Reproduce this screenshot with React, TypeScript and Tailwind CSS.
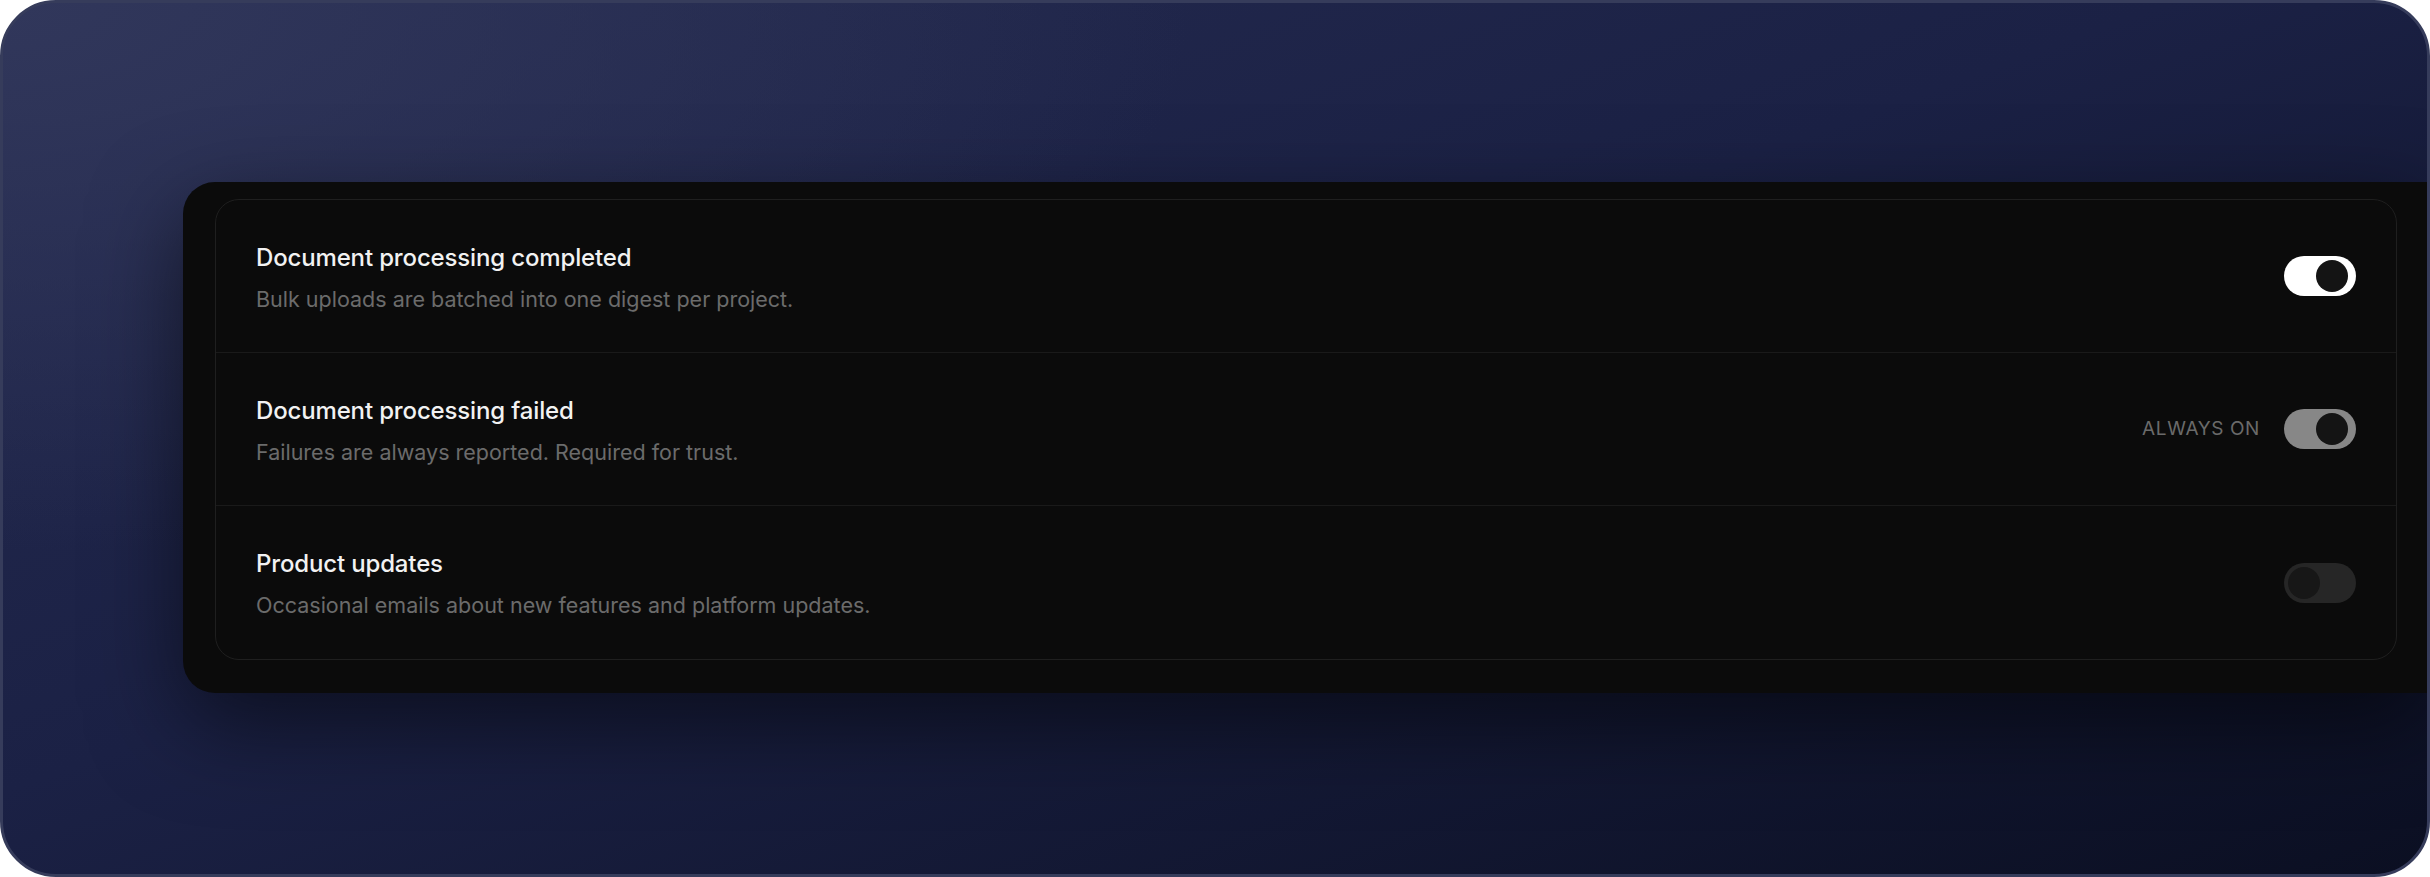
import { useState } from 'react';

type Pref = {
  title: string;
  desc: string;
  on: boolean;
  locked?: boolean;
};

const prefs: Pref[] = [
  {
    title: 'Document processing completed',
    desc: 'Bulk uploads are batched into one digest per project.',
    on: true,
  },
  {
    title: 'Document processing failed',
    desc: 'Failures are always reported. Required for trust.',
    on: true,
    locked: true,
  },
  {
    title: 'Product updates',
    desc: 'Occasional emails about new features and platform updates.',
    on: false,
  },
];

const Toggle = ({ on, locked, onClick }: { on: boolean; locked?: boolean; onClick?: () => void }) => {
  const track = locked ? 'bg-[#878787]' : on ? 'bg-white' : 'bg-[#262626]';
  return (
    <button
      type="button"
      onClick={onClick}
      disabled={locked}
      className={`flex h-[40px] w-[72px] shrink-0 items-center rounded-full p-[4px] ${track}`}
    >
      <span
        className={`h-[32px] w-[32px] rounded-full ${on ? 'translate-x-[28px] bg-[#141414]' : 'bg-[#171717]'}`}
      />
    </button>
  );
};

export default function App() {
  const [state, setState] = useState(prefs.map(p => p.on));

  return (
    <div className="min-h-screen bg-white" style={{ fontFamily: 'Inter, "Noto Sans", sans-serif' }}>
      <div className="flex h-[877px] w-[2430px] flex-col overflow-hidden rounded-[56px] border-[3px] border-[#363c5b] bg-[radial-gradient(ellipse_70%_90%_at_0%_0%,#31375b_0%,transparent_70%),linear-gradient(160deg,#252b50_0%,#1b2145_45%,#0b0f22_100%)] pl-[180px] pt-[179px]">
        <div className="rounded-l-[32px] bg-[#0b0b0b] pb-[33px] pl-[32px] pr-[30px] pt-[17px] shadow-[0_30px_90px_rgba(0,0,0,0.55)]">
          <div className="rounded-[24px] border border-[#1f1f1f]">
            {prefs.map((p, i) => (
              <div
                key={p.title}
                className={`flex h-[153px] items-center justify-between px-10 ${i < prefs.length - 1 ? 'border-b border-[#1a1a1a]' : ''}`}
              >
                <div className="flex flex-col gap-[12px] pt-[3px]">
                  <div className="text-[24px] font-medium leading-[31px] tracking-[-0.15px] text-[#f2f2f2]">{p.title}</div>
                  <div className="text-[21.5px] leading-[29px] text-[#6b6b6b]">{p.desc}</div>
                </div>
                <div className="flex items-center gap-[24px]">
                  {p.locked && (
                    <span className="text-[19px] uppercase tracking-[0.6px] text-[#6a6a6a]">Always on</span>
                  )}
                  <Toggle
                    on={state[i]}
                    locked={p.locked}
                    onClick={() => setState(s => s.map((v, j) => (j === i ? !v : v)))}
                  />
                </div>
              </div>
            ))}
          </div>
        </div>
      </div>
    </div>
  );
}
